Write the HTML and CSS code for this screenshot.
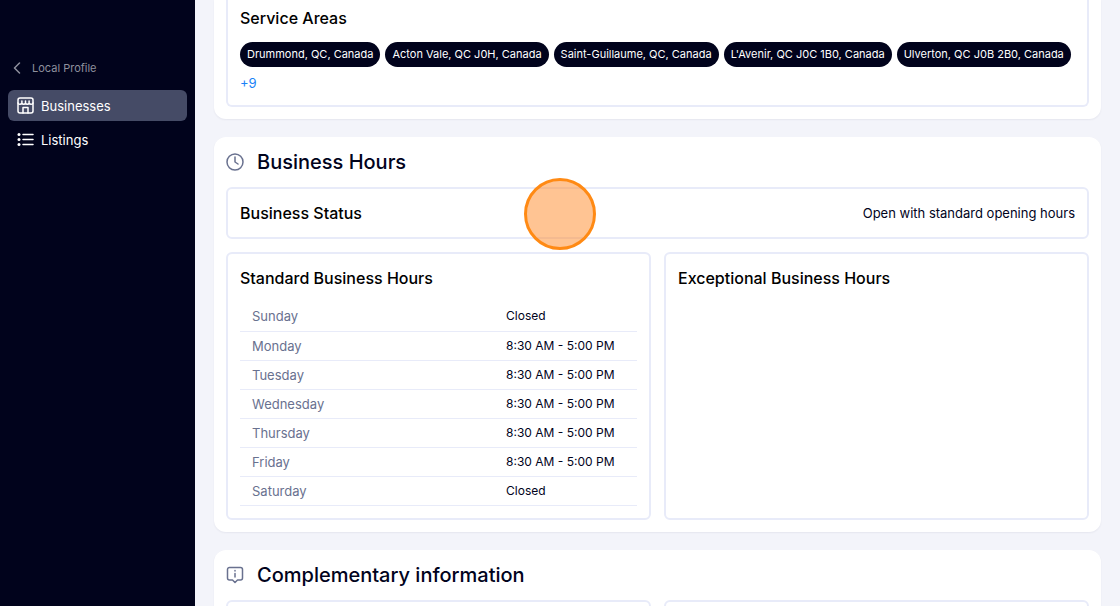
FILE: index.html
```html
<!DOCTYPE html>
<html lang="en">
<head>
  <meta charset="UTF-8" />
  <meta name="viewport" content="width=device-width, initial-scale=1.0" />
  <title>Local Profile - Businesses</title>
  <link rel="stylesheet" href="styles.css">
</head>
<body>
  <nav class="sidebar">
    <a class="back" href="#">
      <svg width="8" height="12" viewBox="0 0 8 12"><path d="M6.5 1 1.5 6l5 5" /></svg>
      Local Profile
    </a>
    <a class="nav-item active" href="#">
      <svg width="17" height="17" viewBox="0 0 17 17">
        <rect x="1" y="1" width="15" height="15" rx="2" />
        <path d="M1 6c.3 1.800 3.400 1.800 3.900 0 .4 1.800 3.200 1.800 3.600 0 .4 1.800 3.200 1.800 3.600 0 .5 1.800 3.600 1.800 3.900 0M4.900 4v2M8.500 4v2M12.100 4v2M6 16v-5.500h5V16" />
      </svg>
      Businesses
    </a>
    <a class="nav-item" href="#">
      <svg width="17" height="17" viewBox="0 0 17 17">
        <path d="M6 3.500h10M6 8.500h10M6 13.500h10" />
        <g class="dots"><circle cx="2" cy="3.500" r="1.500" /><circle cx="2" cy="8.500" r="1.500" /><circle cx="2" cy="13.500" r="1.500" /></g>
      </svg>
      Listings
    </a>
  </nav>

  <main class="content">
    <section class="card card-first">
      <div class="box box-areas">
        <h3>Service Areas</h3>
        <div class="tags">
          <span class="tag">Drummond, QC, Canada</span>
          <span class="tag">Acton Vale, QC J0H, Canada</span>
          <span class="tag">Saint-Guillaume, QC, Canada</span>
          <span class="tag">L'Avenir, QC J0C 1B0, Canada</span>
          <span class="tag">Ulverton, QC J0B 2B0, Canada</span>
        </div>
        <a class="more" href="#">+9</a>
      </div>
    </section>

    <section class="card">
      <h2>
        <svg width="18" height="18" viewBox="0 0 18 18"><circle cx="9" cy="9" r="8" /><path d="M9 4v5l3 2" /></svg>
        Business Hours
      </h2>
      <div class="box status">
        <h3>Business Status</h3>
        <span>Open with standard opening hours</span>
      </div>
      <div class="columns">
        <div class="box">
          <h3>Standard Business Hours</h3>
          <table class="hours">
            <tr><th scope="row">Sunday</th><td>Closed</td></tr>
            <tr><th scope="row">Monday</th><td>8:30 AM - 5:00 PM</td></tr>
            <tr><th scope="row">Tuesday</th><td>8:30 AM - 5:00 PM</td></tr>
            <tr><th scope="row">Wednesday</th><td>8:30 AM - 5:00 PM</td></tr>
            <tr><th scope="row">Thursday</th><td>8:30 AM - 5:00 PM</td></tr>
            <tr><th scope="row">Friday</th><td>8:30 AM - 5:00 PM</td></tr>
            <tr><th scope="row">Saturday</th><td>Closed</td></tr>
          </table>
        </div>
        <div class="box">
          <h3>Exceptional Business Hours</h3>
        </div>
      </div>
    </section>

    <section class="card">
      <h2>
        <svg width="18" height="18" viewBox="0 0 18 18">
          <path d="M3.500 1.500h11a2 2 0 0 1 2 2v8.500a2 2 0 0 1-2 2h-3L9 16.500 6.500 14h-3a2 2 0 0 1-2-2V3.500a2 2 0 0 1 2-2zM9 4.600v.4M9 7.500v3.500" />
        </svg>
        Complementary information
      </h2>
      <div class="columns">
        <div class="box box-empty"></div>
        <div class="box box-empty"></div>
      </div>
    </section>
  </main>

  <div class="click-marker"></div>
</body>
</html>
```

FILE: styles.css
```css
* {
  box-sizing: border-box;
}

body {
  position: relative;
  display: flex;
  height: 100vh;
  margin: 0;
  overflow: hidden;
  background-color: #f3f4fa;
  color: #01031c;
  font-family: Inter, sans-serif;
  font-size: 13px;
  line-height: 20px;
}

h2, h3 {
  margin: 0;
  font-weight: 500;
}

h2 {
  display: flex;
  align-items: center;
  gap: 13px;
  height: 50px;
  font-size: 20px;
}

h3 {
  color: #000;
  font-size: 16px;
  line-height: 24px;
}

svg {
  flex: none;
  fill: none;
  stroke: currentColor;
  stroke-width: 1.5;
  stroke-linecap: round;
  stroke-linejoin: round;
}

h2 svg {
  color: #69718f;
}

/* sidebar */
.sidebar {
  flex: none;
  width: 195px;
  padding: 58px 8px 0;
  background-color: #01031c;
}

.sidebar a {
  display: flex;
  align-items: center;
  color: #fff;
  text-decoration: none;
}

.sidebar .back {
  gap: 11px;
  margin-bottom: 12px;
  padding-left: 5px;
  color: #8e909d;
  font-size: 11px;
}

.nav-item {
  gap: 7px;
  height: 31px;
  margin-bottom: 3px;
  padding-left: 9px;
  border-radius: 6px;
}

.active {
  background-color: #454b66;
}

.dots {
  fill: currentColor;
  stroke: none;
}

/* content */
.content {
  flex: 1;
  min-width: 0;
  padding: 0 19px;
}

.card {
  margin-bottom: 18px;
  padding: 0 12px 12px;
  background-color: #fff;
  border-radius: 12px;
  box-shadow: 0 1px 2px rgba(20, 20, 60, 0.06);
}

.card-first {
  border-radius: 0 0 12px 12px;
}

.box {
  padding: 12px;
  border: 2px solid #e8ebf9;
  border-radius: 6px;
}

.box-areas {
  padding-top: 6px;
  border-top: none;
  border-radius: 0 0 6px 6px;
}

.tags {
  display: flex;
  flex-wrap: wrap;
  gap: 5px;
  margin: 12px 0 6px;
}

.tag {
  padding: 0 7px;
  border-radius: 13px;
  background-color: #01031c;
  color: #fff;
  font-size: 11px;
  line-height: 25px;
  white-space: nowrap;
}

.more {
  display: block;
  color: #1a82f7;
  text-decoration: none;
}

.status {
  display: flex;
  align-items: center;
  justify-content: space-between;
  margin-bottom: 13px;
}

.columns {
  display: grid;
  grid-template-columns: 1fr 1fr;
  gap: 13px;
}

.hours {
  width: 100%;
  margin-top: 12px;
  border-collapse: collapse;
}

.hours th, .hours td {
  height: 29px;
  padding: 0 12px;
  border-bottom: 1px solid #e8ebf9;
  text-align: left;
}

.hours th {
  width: 64%;
  color: #69718f;
  font-weight: 400;
}

.hours td {
  font-size: 12px;
}

.box-empty {
  height: 120px;
}

/* highlighted click position */
.click-marker {
  position: absolute;
  top: 178px;
  left: 50%;
  width: 72px;
  height: 72px;
  margin-left: -36px;
  border: 3px solid #ff8a14;
  border-radius: 50%;
  background-color: rgba(255, 138, 40, 0.5);
}
```
